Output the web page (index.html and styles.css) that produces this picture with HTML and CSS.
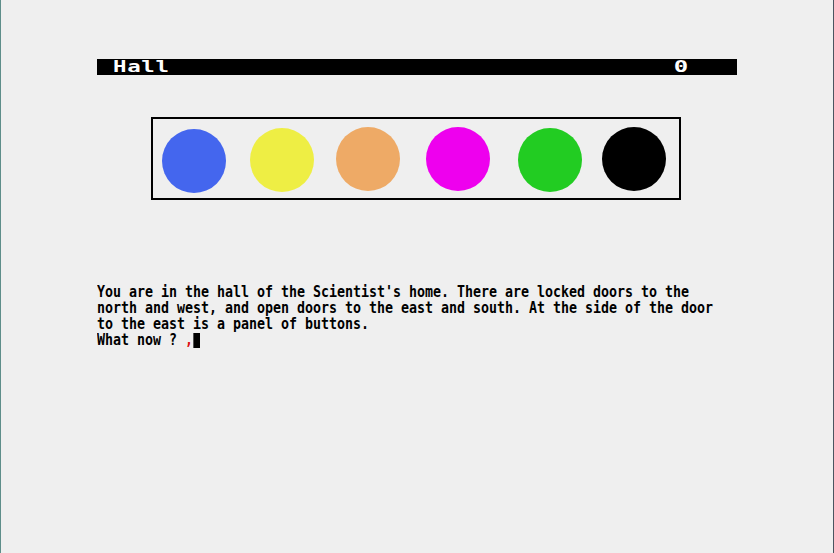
FILE: index.html
```html
<!DOCTYPE html>
<html>
<head>
<meta charset="utf-8">
<link rel="stylesheet" href="styles.css">
</head>
<body>
<div class="screen">
  <div class="status">
    <span class="room">Hall</span>
    <span class="score">0</span>
  </div>
  <div class="panel">
    <span class="btn blue"></span>
    <span class="btn yellow"></span>
    <span class="btn orange"></span>
    <span class="btn magenta"></span>
    <span class="btn green"></span>
    <span class="btn black"></span>
  </div>
  <div class="text">
    <div class="line">You are in the hall of the Scientist's home. There are locked doors to the</div>
    <div class="line">north and west, and open doors to the east and south. At the side of the door</div>
    <div class="line">to the east is a panel of buttons.</div>
    <div class="line">What now ? <span class="mark">,</span><span class="cursor"></span></div>
  </div>
</div>
</body>
</html>
```
FILE: styles.css
```css
html, body {
  margin: 0;
  padding: 0;
  background: #efefef;
}
body {
  width: 834px;
  height: 553px;
  box-sizing: border-box;
  border-left: 1px solid #5e8e8a;
  border-right: 1px solid #4a5560;
  overflow: hidden;
}
.screen {
  padding: 59px 0 0 96px;
  display: flex;
  flex-direction: column;
  align-items: flex-start;
}
.status {
  width: 640px;
  height: 16px;
  background: #000;
  color: #fff;
  display: flex;
  justify-content: space-between;
  align-items: center;
  font-family: "DejaVu Sans Mono", monospace;
  font-weight: bold;
  font-size: 16px;
  line-height: 16px;
  padding: 0 48px 0 16px;
  box-sizing: border-box;
}
.room {
  display: inline-block;
  transform: scaleX(1.4);
  transform-origin: left center;
  letter-spacing: 0.5px;
}
.score {
  display: inline-block;
  width: 16px;
  text-align: center;
  transform: scaleX(1.5);
}
.panel {
  margin: 42px 0 0 54px;
  width: 530px;
  height: 83px;
  box-sizing: border-box;
  border: 2px solid #000;
  display: flex;
  align-items: flex-start;
  padding: 9px 0 0 9px;
  gap: 24px;
}
.btn {
  width: 64px;
  height: 64px;
  border-radius: 50%;
  flex: none;
}
.btn.blue { background: #4466ee; margin-top: 1px; }
.btn.yellow { background: #eeee44; margin-right: -2px; }
.btn.orange { background: #eeaa66; margin-top: -1px; }
.btn.magenta { background: #ee00ee; margin-top: -1px; margin-left: 2px; }
.btn.green { background: #22cc22; margin-left: 4px; }
.btn.black { background: #000; margin-left: -4px; margin-top: -1px; }
.text {
  margin-top: 84px;
  font-family: "DejaVu Sans Mono", monospace;
  font-size: 16px;
  font-weight: bold;
  color: #000;
  transform: scaleX(0.8306);
  transform-origin: top left;
}
.line {
  height: 16px;
  line-height: 16px;
  white-space: pre;
}
.mark {
  color: #dd1111;
  display: inline-block;
  width: 9.63px;
  font-weight: bold;
}
.cursor {
  display: inline-block;
  width: 8.5px;
  height: 15px;
  background: #000;
  vertical-align: -3px;
}
```
